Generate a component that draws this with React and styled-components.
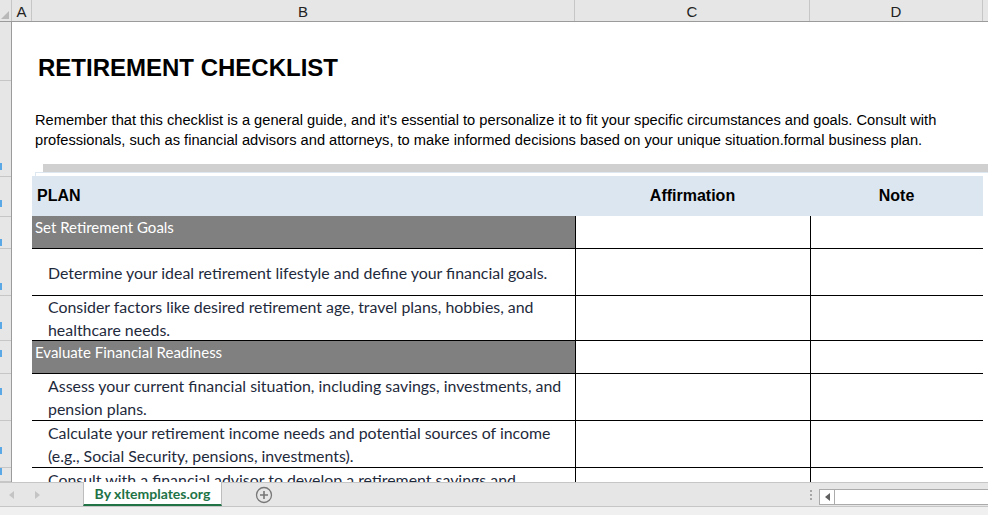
import styled, { createGlobalStyle } from 'styled-components';

const GlobalStyle = createGlobalStyle`
  html, body {
    margin: 0;
    padding: 0;
    background: #ffffff;
    overflow: hidden;
  }
`;

const COLS = [20, 543, 235, 173];
const ROW_HEIGHTS = [59, 96, 40, 32, 47, 45, 33, 47, 47, 14];
const ROW_MARKS = [null, 82, 23, 22, 34, 26, 9, 14, 26, 0];

const rows = [
  { type: 'section', lines: ['Set Retirement Goals'], height: 33 },
  { type: 'item', lines: ['Determine your ideal retirement lifestyle and define your financial goals.'], height: 47 },
  {
    type: 'item',
    lines: ['Consider factors like desired retirement age, travel plans, hobbies, and', 'healthcare needs.'],
    height: 45,
  },
  { type: 'section', lines: ['Evaluate Financial Readiness'], height: 33 },
  {
    type: 'item',
    lines: ['Assess your current financial situation, including savings, investments, and', 'pension plans.'],
    height: 47,
  },
  {
    type: 'item',
    lines: ['Calculate your retirement income needs and potential sources of income', '(e.g., Social Security, pensions, investments).'],
    height: 47,
  },
  {
    type: 'item',
    lines: ['Consult with a financial advisor to develop a retirement savings and', 'investment strategy.'],
    height: 47,
  },
];

const Window = styled.div`
  width: 988px;
  height: 515px;
  display: flex;
  flex-direction: column;
  overflow: hidden;
  background: #fff;
  font-family: 'Liberation Sans', Arial, sans-serif;
`;

const ColumnBar = styled.div`
  display: flex;
  height: 21px;
  flex-shrink: 0;
  background: #e6e6e6;
  border-bottom: 1px solid #9b9b9b;
`;

const Corner = styled.div`
  position: relative;
  width: 11px;
  border-right: 1px solid #c6c6c6;

  &::after {
    content: '';
    position: absolute;
    right: 2px;
    bottom: 2px;
    border-style: solid;
    border-width: 0 0 8px 8px;
    border-color: transparent transparent #b9b9b9 transparent;
  }
`;

const ColHead = styled.div`
  width: ${(p) => p.$w}px;
  flex-shrink: 0;
  box-sizing: border-box;
  border-right: 1px solid #c6c6c6;
  display: flex;
  align-items: center;
  justify-content: center;
  font-size: 15px;
  color: #222;
  padding-top: 1px;
`;

const ColFill = styled.div`
  flex: 1;
`;

const Body = styled.div`
  flex: 1;
  display: flex;
  min-height: 0;
  overflow: hidden;
`;

const RowHeader = styled.div`
  width: 11px;
  flex-shrink: 0;
  background: #e6e6e6;
  border-right: 1px solid #9b9b9b;
  display: flex;
  flex-direction: column;
`;

const RowNum = styled.div`
  position: relative;
  height: ${(p) => p.$h}px;
  flex-shrink: 0;
  box-sizing: border-box;
  border-bottom: 1px solid #c6c6c6;
`;

const RowMark = styled.span`
  position: absolute;
  left: 0;
  top: ${(p) => p.$top}px;
  width: 2px;
  height: 7px;
  background: #5aa9e6;
`;

const Sheet = styled.div`
  flex: 1;
  display: flex;
  flex-direction: column;
  min-width: 0;
`;

const TitleRow = styled.div`
  height: 59px;
  flex-shrink: 0;
  box-sizing: border-box;
  padding: 32px 0 0 26px;
`;

const Title = styled.h1`
  margin: 0;
  font-size: 24px;
  line-height: 27px;
  font-weight: bold;
  color: #000;
  white-space: nowrap;
`;

const IntroRow = styled.div`
  height: 95px;
  flex-shrink: 0;
  box-sizing: border-box;
  padding-top: 29px;
  display: flex;
  flex-direction: column;
`;

const Intro = styled.p`
  margin: 0 0 0 23px;
  font-size: 14.67px;
  line-height: 20px;
  color: #000;
  white-space: nowrap;
`;

const GreyBar = styled.div`
  margin: 14px 0 0 31px;
  height: 8px;
  background: #d0d0d0;
`;

const LightEdge = styled.div`
  margin: 0 0 0 23px;
  height: 4px;
  box-sizing: border-box;
  border-top: 1px solid #dde7f2;
  border-left: 1px solid #dde7f2;
`;

const Grid = styled.div`
  display: grid;
  grid-template-columns: ${COLS.map((c) => `${c}px`).join(' ')} 1fr;
`;

const HeadCell = styled.div`
  height: 40px;
  box-sizing: border-box;
  background: ${(p) => (p.$blank ? 'transparent' : '#dce6f1')};
  display: flex;
  align-items: center;
  justify-content: ${(p) => (p.$left ? 'flex-start' : 'center')};
  padding-left: ${(p) => (p.$left ? '5px' : '0')};
  font-size: 16px;
  font-weight: bold;
  color: #000;
`;

const Blank = styled.div`
  height: ${(p) => p.$h}px;
`;

const PlanCell = styled.div`
  height: ${(p) => p.$h}px;
  box-sizing: border-box;
  border-bottom: 1px solid #000;
  background: ${(p) => (p.$section ? '#808080' : '#fff')};
  color: ${(p) => (p.$section ? '#fff' : '#1e2a3c')};
  font-family: Lato, 'Open Sans', sans-serif;
  font-size: ${(p) => (p.$section ? '15px' : '15.9px')};
  line-height: 23px;
  white-space: nowrap;
  overflow: hidden;
  display: flex;
  flex-direction: column;
  justify-content: ${(p) => (p.$section ? 'flex-start' : 'center')};
  padding: ${(p) => (p.$section ? '0 0 0 3px' : '0 0 0 16px')};
`;

const EmptyCell = styled.div`
  height: ${(p) => p.$h}px;
  box-sizing: border-box;
  border-left: 1px solid #000;
  border-bottom: 1px solid #000;
`;

const TabBar = styled.div`
  height: 23px;
  flex-shrink: 0;
  display: flex;
  align-items: stretch;
  background: #e6e6e6;
  border-top: 1px solid #c6c6c6;
  border-bottom: 1px solid #c6c6c6;
`;

const NavArrows = styled.div`
  width: 83px;
  display: flex;
  align-items: center;
  gap: 21px;
  padding-left: 9px;
  box-sizing: border-box;
`;

const Arrow = styled.span`
  width: 0;
  height: 0;
  border-style: solid;
  border-width: 4px ${(p) => (p.$left ? '5px' : '0')} 4px ${(p) => (p.$left ? '0' : '5px')};
  border-color: transparent ${(p) => (p.$left ? p.$color || '#c4c4c4' : 'transparent')} transparent
    ${(p) => (p.$left ? 'transparent' : p.$color || '#c4c4c4')};
`;

const SheetTab = styled.div`
  width: 139px;
  margin-top: -1px;
  box-sizing: border-box;
  background: #fff;
  border-left: 1px solid #bdbdbd;
  border-right: 1px solid #bdbdbd;
  border-bottom: 2px solid #217346;
  display: flex;
  align-items: center;
  justify-content: center;
  font-family: Lato, 'Open Sans', sans-serif;
  font-weight: bold;
  font-size: 14px;
  color: #217346;
`;

const AddSheet = styled.div`
  width: 84px;
  display: flex;
  align-items: center;
  justify-content: center;
`;

const Spacer = styled.div`
  flex: 1;
`;

const Dots = styled.div`
  width: 16px;
  display: flex;
  flex-direction: column;
  align-items: center;
  justify-content: center;
  gap: 2px;

  & span {
    width: 2px;
    height: 2px;
    background: #a6a6a6;
  }
`;

const ScrollTrack = styled.div`
  width: 169px;
  margin: 6px 0 1px;
  box-sizing: border-box;
  background: #fff;
  border: 1px solid #ababab;
  border-right: none;
  display: flex;
`;

const ScrollBtn = styled.div`
  width: 14px;
  border-right: 1px solid #ababab;
  display: flex;
  align-items: center;
  justify-content: center;
`;

const StatusStrip = styled.div`
  height: 8px;
  flex-shrink: 0;
  background: #f0f0f0;
`;

const PlusIcon = () => (
  <svg width="18" height="18" viewBox="0 0 18 18">
    <circle cx="9" cy="9" r="7.5" fill="none" stroke="#777" strokeWidth="1.3" />
    <path d="M9 5v8M5 9h8" stroke="#777" strokeWidth="1.6" />
  </svg>
);

export default function App() {
  return (
    <>
      <GlobalStyle />
      <Window>
        <ColumnBar>
          <Corner />
          {['A', 'B', 'C', 'D'].map((l, i) => (
            <ColHead key={l} $w={COLS[i]}>
              {l}
            </ColHead>
          ))}
          <ColFill />
        </ColumnBar>
        <Body>
          <RowHeader>
            {ROW_HEIGHTS.map((h, i) => (
              <RowNum key={i} $h={h}>
                {ROW_MARKS[i] !== null && <RowMark $top={ROW_MARKS[i]} />}
              </RowNum>
            ))}
          </RowHeader>
          <Sheet>
            <TitleRow>
              <Title>RETIREMENT CHECKLIST</Title>
            </TitleRow>
            <IntroRow>
              <Intro>
                Remember that this checklist is a general guide, and it's essential to personalize it to fit your specific circumstances and goals. Consult with
                <br />
                professionals, such as financial advisors and attorneys, to make informed decisions based on your unique situation.formal business plan.
              </Intro>
              <GreyBar />
              <LightEdge />
            </IntroRow>
            <Grid>
              <HeadCell $blank />
              <HeadCell $left>PLAN</HeadCell>
              <HeadCell>Affirmation</HeadCell>
              <HeadCell>Note</HeadCell>
              <HeadCell $blank />
              {rows.map((r, i) => [
                <Blank key={`a${i}`} $h={r.height} />,
                <PlanCell key={`b${i}`} $h={r.height} $section={r.type === 'section'}>
                  {r.lines.map((t) => (
                    <span key={t}>{t}</span>
                  ))}
                </PlanCell>,
                <EmptyCell key={`c${i}`} $h={r.height} />,
                <EmptyCell key={`d${i}`} $h={r.height} />,
                <Blank key={`e${i}`} $h={r.height} />,
              ])}
            </Grid>
          </Sheet>
        </Body>
        <TabBar>
          <NavArrows>
            <Arrow $left />
            <Arrow />
          </NavArrows>
          <SheetTab>By xltemplates.org</SheetTab>
          <AddSheet>
            <PlusIcon />
          </AddSheet>
          <Spacer />
          <Dots>
            <span />
            <span />
            <span />
          </Dots>
          <ScrollTrack>
            <ScrollBtn>
              <Arrow $left $color="#606060" />
            </ScrollBtn>
          </ScrollTrack>
        </TabBar>
        <StatusStrip />
      </Window>
    </>
  );
}
